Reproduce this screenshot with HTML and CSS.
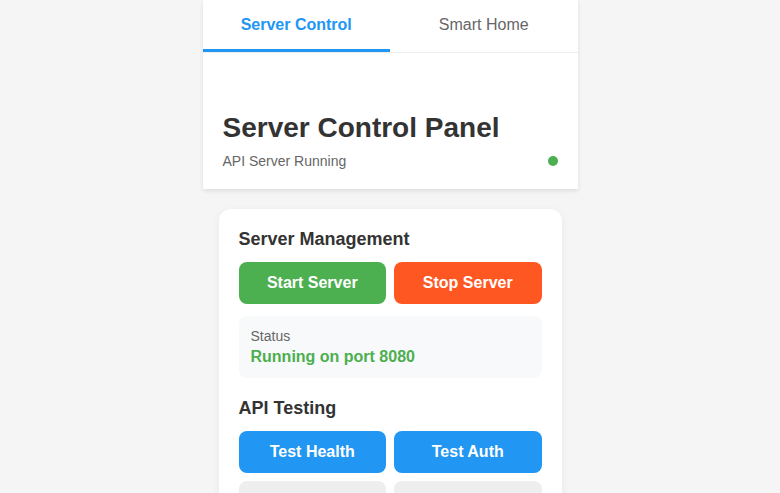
FILE: index.html
```html
<!DOCTYPE html>
<html>
<head>
<meta charset="utf-8">
<link rel="stylesheet" href="styles.css">
</head>
<body>
<div class="app">
  <header class="header">
    <nav class="tabs">
      <button class="tab active">Server Control</button>
      <button class="tab">Smart Home</button>
    </nav>
    <div class="header-body">
      <h1 class="title">Server Control Panel</h1>
      <div class="status-line">
        <span class="subtitle">API Server Running</span>
        <span class="dot"></span>
      </div>
    </div>
  </header>
  <main class="content">
    <section class="card">
      <h2 class="card-title">Server Management</h2>
      <div class="btn-grid">
        <button class="btn green">Start Server</button>
        <button class="btn orange">Stop Server</button>
      </div>
      <div class="status-box">
        <div class="status-label">Status</div>
        <div class="status-value">Running on port 8080</div>
      </div>
      <h2 class="card-title second">API Testing</h2>
      <div class="btn-grid">
        <button class="btn blue">Test Health</button>
        <button class="btn blue">Test Auth</button>
        <button class="btn grey">Test Devices</button>
        <button class="btn grey">Test Scenes</button>
      </div>
    </section>
  </main>
</div>
</body>
</html>
```
FILE: styles.css
```css
* { box-sizing: border-box; }
html, body { margin: 0; padding: 0; }
body {
  background: #f5f5f5;
  font-family: "Liberation Sans", Arial, sans-serif;
  color: #333;
  overflow: hidden;
}
.app {
  width: 375px;
  margin: 0 auto;
}
.header {
  background: #fff;
  box-shadow: 0 2px 4px rgba(0,0,0,0.1);
}
.tabs {
  display: flex;
  border-bottom: 1px solid #eee;
}
.tab {
  flex: 1;
  background: none;
  border: none;
  border-bottom: 3px solid transparent;
  font-family: inherit;
  font-size: 16px;
  line-height: 18px;
  padding: 16px 0 15px;
  color: #666;
}
.tab.active {
  color: #2196F3;
  font-weight: bold;
  border-bottom-color: #2196F3;
}
.header-body {
  padding: 59px 20px 20px;
}
.title {
  margin: 0 0 9px;
  font-size: 28px;
  line-height: 32px;
  font-weight: bold;
  color: #333;
}
.status-line {
  display: flex;
  align-items: center;
  justify-content: space-between;
}
.subtitle {
  font-size: 14px;
  line-height: 16px;
  color: #666;
}
.dot {
  width: 10px;
  height: 10px;
  border-radius: 50%;
  background: #4CAF50;
}
.content {
  padding: 20px 16px;
}
.card {
  background: #fff;
  border-radius: 12px;
  padding: 20px;
  box-shadow: 0 2px 8px rgba(0,0,0,0.06);
}
.card-title {
  margin: 0 0 12px;
  font-size: 18px;
  line-height: 21px;
  font-weight: bold;
  color: #333;
}
.card-title.second {
  margin-top: 20px;
}
.btn-grid {
  display: grid;
  grid-template-columns: 1fr 1fr;
  gap: 8px;
}
.btn {
  border: none;
  border-radius: 8px;
  padding: 12px 0;
  font-family: inherit;
  font-size: 16px;
  line-height: 18px;
  font-weight: bold;
  color: #fff;
}
.btn.green { background: #4CAF50; }
.btn.orange { background: #FF5722; }
.btn.blue { background: #2196F3; }
.btn.grey { background: #eee; color: #333; }
.status-box {
  margin-top: 12px;
  background: #f8f9fa;
  border-radius: 8px;
  padding: 12px;
}
.status-label {
  font-size: 14px;
  line-height: 16px;
  color: #666;
  margin-bottom: 4px;
}
.status-value {
  font-size: 16px;
  line-height: 18px;
  font-weight: bold;
  color: #4CAF50;
}
```
